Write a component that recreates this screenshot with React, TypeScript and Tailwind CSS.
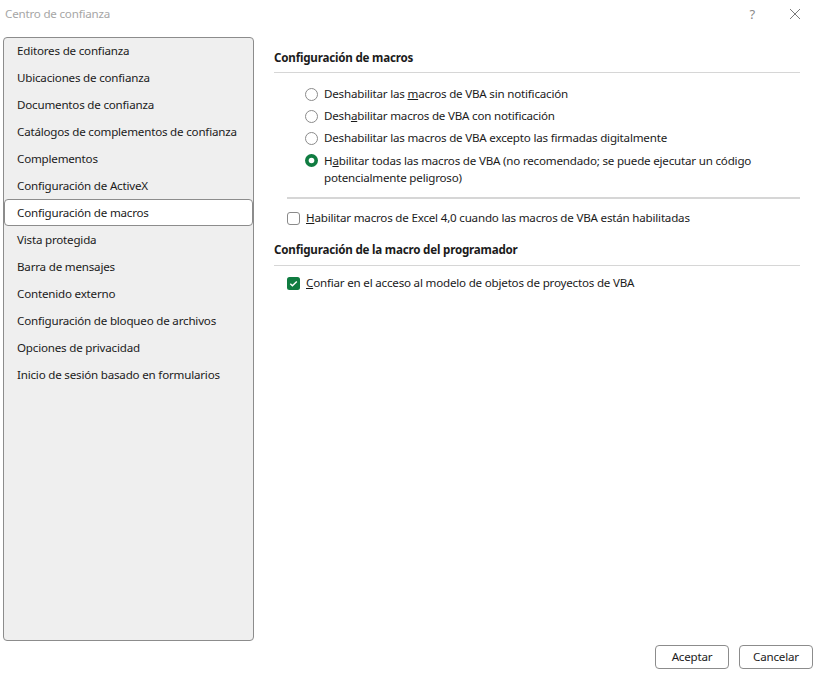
import React from "react";

const items = [
  "Editores de confianza",
  "Ubicaciones de confianza",
  "Documentos de confianza",
  "Catálogos de complementos de confianza",
  "Complementos",
  "Configuración de ActiveX",
  "Configuración de macros",
  "Vista protegida",
  "Barra de mensajes",
  "Contenido externo",
  "Configuración de bloqueo de archivos",
  "Opciones de privacidad",
  "Inicio de sesión basado en formularios",
];

function Radio({ checked }: { checked?: boolean }) {
  return checked ? (
    <svg width="13" height="13" viewBox="0 0 13 13" className="shrink-0">
      <circle cx="6.5" cy="6.5" r="6.5" fill="#107c41" />
      <circle cx="6.5" cy="6.5" r="2.8" fill="#fff" />
    </svg>
  ) : (
    <svg width="13" height="13" viewBox="0 0 13 13" className="shrink-0">
      <circle cx="6.5" cy="6.5" r="6" fill="#fff" stroke="#8a8a8a" strokeWidth="1" />
    </svg>
  );
}

export default function App() {
  return (
    <div
      className="relative w-[820px] h-[674px] bg-white text-[11.6px] tracking-[-0.2px] text-[#1b1b1b] overflow-hidden flex flex-col whitespace-nowrap"
      style={{ fontFamily: '"Noto Sans", "Segoe UI", sans-serif' }}
    >
      <div className="h-[28px] flex items-center pl-[5px] pr-[16px] shrink-0">
        <span className="text-[#a6a6a6] leading-none">Centro de confianza</span>
        <span className="ml-auto text-[#8a8a8a] text-[13px] leading-none mr-[34px]">?</span>
        <svg width="12" height="12" viewBox="0 0 12 12" className="mr-[3px]">
          <path d="M1 1L11 11M11 1L1 11" stroke="#7a7a7a" strokeWidth="1" />
        </svg>
      </div>
      <div className="flex flex-1 pt-[9px] pl-[3px]">
        <div className="w-[251px] h-[604px] bg-[#efefef] border border-[#8c8c8c] rounded-[4px] flex flex-col">
          <div className="flex flex-col -mt-[1px]">
            {items.map((t, i) => (
              <div
                key={t}
                className={
                  i === 6
                    ? "h-[27px] flex items-center pl-[12px] bg-white border border-[#8c8c8c] rounded-[4px]"
                    : "h-[27px] flex items-center pl-[12px] border border-transparent"
                }
              >
                {t}
              </div>
            ))}
          </div>
        </div>
        <div className="flex-1 flex flex-col pl-[20px] pr-[20px] pt-[11px]">
          <div className="font-bold h-[20px] flex items-center">Configuración de macros</div>
          <div className="h-px bg-[#d6d6d6] mt-[4px]" />
          <div className="flex flex-col pl-[31px] pt-[10px]">
            {[
              <>Deshabilitar las <u>m</u>acros de VBA sin notificación</>,
              <>Desh<u>a</u>bilitar macros de VBA con notificación</>,
              <>Deshabilitar las macros de VBA excepto las firmadas di<u>g</u>italmente</>,
            ].map((c, i) => (
              <div key={i} className="h-[22px] flex items-center gap-[6px]">
                <Radio />
                <span>{c}</span>
              </div>
            ))}
            <div className="flex items-start gap-[6px] pt-[3px]">
              <div className="pt-[2px]">
                <Radio checked />
              </div>
              <span className="leading-[17px]">
                H<u>a</u>bilitar todas las macros de VBA (no recomendado; se puede ejecutar un código
                <br />
                potencialmente peligroso)
              </span>
            </div>
          </div>
          <div className="h-[2px] bg-[#d6d6d6] ml-[13px] mt-[11px]" />
          <div className="flex items-center gap-[6px] pl-[13px] mt-[12px] h-[14px]">
            <div className="w-[13px] h-[13px] border border-[#8a8a8a] rounded-[3px] bg-white" />
            <span>
              <u>H</u>abilitar macros de Excel 4,0 cuando las macros de VBA están habilitadas
            </span>
          </div>
          <div className="font-bold h-[20px] flex items-center mt-[15px]">
            Configuración de la macro del programador
          </div>
          <div className="h-px bg-[#d6d6d6] mt-[5px]" />
          <div className="flex items-center gap-[6px] pl-[13px] mt-[10px] h-[14px]">
            <svg width="13" height="13" viewBox="0 0 13 13" className="shrink-0">
              <rect width="13" height="13" rx="2.5" fill="#107c41" />
              <path d="M3.3 6.7L5.4 8.7L9.8 4.4" stroke="#fff" strokeWidth="1.4" fill="none" />
            </svg>
            <span>
              <u>C</u>onfiar en el acceso al modelo de objetos de proyectos de VBA
            </span>
          </div>
        </div>
      </div>
      <div className="absolute left-[655px] top-[645px] flex gap-[10px]">
        <button className="w-[74px] h-[24px] border border-[#8c8c8c] rounded-[4px] bg-white flex items-center justify-center">
          Aceptar
        </button>
        <button className="w-[74px] h-[24px] border border-[#8c8c8c] rounded-[4px] bg-white flex items-center justify-center">
          Cancelar
        </button>
      </div>
    </div>
  );
}
